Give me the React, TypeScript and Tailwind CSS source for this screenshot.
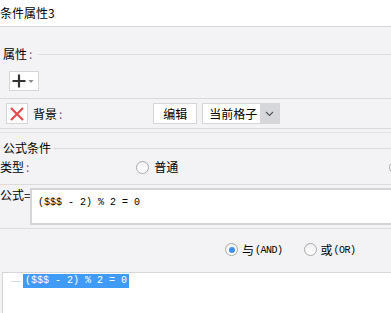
import React from 'react';

const cjk = "font-['Noto_Sans_CJK_SC','Noto_Sans',sans-serif]";
const mono = "font-['Liberation_Mono','DejaVu_Sans_Mono',monospace]";

const Radio = ({ checked }: { checked?: boolean }) => (
  <span className="flex h-[13px] w-[13px] items-center justify-center rounded-full border border-[#a9a9ad] bg-gradient-to-b from-[#f2f2f2] to-white">
    {checked && <span className="h-[6px] w-[6px] rounded-full bg-[#3f8ef2]" />}
  </span>
);

export default function App() {
  return (
    <div className={`h-[313px] w-[391px] overflow-hidden bg-[#f3f3f5] text-[12px] leading-none text-black ${cjk}`}>
      {/* title */}
      <div className="flex h-[27px] items-center border-b border-[#d6d6d9] bg-white pb-[1px]">
        <span>条件属性3</span>
      </div>

      {/* 属性 */}
      <div className="mt-[20px] flex h-[14px] items-center pl-[3px]">
        <span>属性</span>
        <span className="ml-[2px] text-[#8a4a8a]">:</span>
        <span className="ml-[6px] h-px flex-1 bg-[#dedee2]" />
      </div>
      <div className="ml-[9px] mt-[10px] flex h-[20px] w-[30px] items-center justify-center border border-[#d6d6d9] bg-white">
        <svg width="26" height="16" viewBox="0 0 26 16">
          <path d="M8 1.5v13M1.5 8h13" stroke="#333" strokeWidth="2.2" />
          <path d="M17.5 7h5l-2.5 3z" fill="#888" />
        </svg>
      </div>

      {/* 背景 row */}
      <div className="mt-[7px] flex h-[31px] items-center border-y border-[#d9d9dd]">
        <div className="ml-[6px] flex h-[21px] w-[22px] items-center justify-center border border-[#d6d6d9] bg-white">
          <svg width="16" height="16" viewBox="0 0 16 16">
            <path d="M2 2l12 12M14 2L2 14" stroke="#e5484d" strokeWidth="2.2" />
          </svg>
        </div>
        <span className="ml-[5px]">背景</span>
        <span className="ml-[2px] text-[#8a4a8a]">:</span>
        <button className="ml-[91px] flex h-[21px] w-[44px] items-center justify-center border border-[#d6d6d9] bg-white">编辑</button>
        <div className="ml-[5px] flex h-[21px] w-[78px] border border-[#d6d6d9] bg-white">
          <span className="flex flex-1 items-center pl-[6px]">当前格子</span>
          <span className="flex w-[19px] items-center justify-center bg-[#d6d7db]">
            <svg width="9" height="6" viewBox="0 0 9 6">
              <path d="M1 1l3.5 3.5L8 1" stroke="#555" strokeWidth="1.1" fill="none" />
            </svg>
          </span>
        </div>
      </div>
      <div className="mt-[3px] h-px bg-[#e2e2e6]" />

      {/* 公式条件 */}
      <div className="mt-[8px] flex h-[14px] items-center pl-[3px]">
        <span>公式条件</span>
        <span className="ml-[2px] h-px flex-1 bg-[#dedee2]" />
      </div>
      <div className="mt-[5px] flex h-[14px] items-center">
        <span>类型</span>
        <span className="ml-[2px] text-[#8a4a8a]">:</span>
        <span className="ml-[107px]"><Radio /></span>
        <span className="ml-[5px]">普通</span>
        <span className="ml-auto mr-[-11px]"><Radio /></span>
      </div>
      <div className="mt-[10px] h-px bg-[#dcdce0]" />

      {/* 公式= */}
      <div className="mt-[3px] flex">
        <span className="mt-[1px] w-[30px] shrink-0 whitespace-nowrap">公式=</span>
        <div className={`relative h-[37px] flex-1 border-2 border-r-0 border-[#d5d5d9] bg-white pl-[6px] pt-[8px] text-[10px] ${mono}`}>
          ($$$ - 2) % 2 = 0
        </div>
      </div>
      <div className="mt-[3px] h-px bg-[#dcdce0]" />

      {/* AND / OR */}
      <div className="flex h-[43px] items-center pb-[2px]">
        <span className="ml-[225px]"><Radio checked /></span>
        <span className="ml-[4px]">与</span>
        <span className={`ml-[1px] pt-[2px] text-[10px] tracking-[-0.5px] ${mono}`}>(AND)</span>
        <span className="ml-[21px]"><Radio /></span>
        <span className="ml-[4px]">或</span>
        <span className={`ml-[1px] pt-[2px] text-[10px] tracking-[-0.5px] ${mono}`}>(OR)</span>
      </div>

      {/* tree */}
      <div className="ml-[2px] h-[41px] border-l border-t border-[#d6d6d9] bg-white pt-px">
        <div className="flex items-center">
          <span className="ml-[8px] h-px w-[10px] bg-[#d8d8d8]" />
          <span className={`ml-[2px] flex h-[14px] items-center bg-[#3f9bf5] px-[2px] text-[10px] text-white ${mono}`}>
            ($$$ - 2) % 2 = 0
          </span>
        </div>
      </div>
    </div>
  );
}
